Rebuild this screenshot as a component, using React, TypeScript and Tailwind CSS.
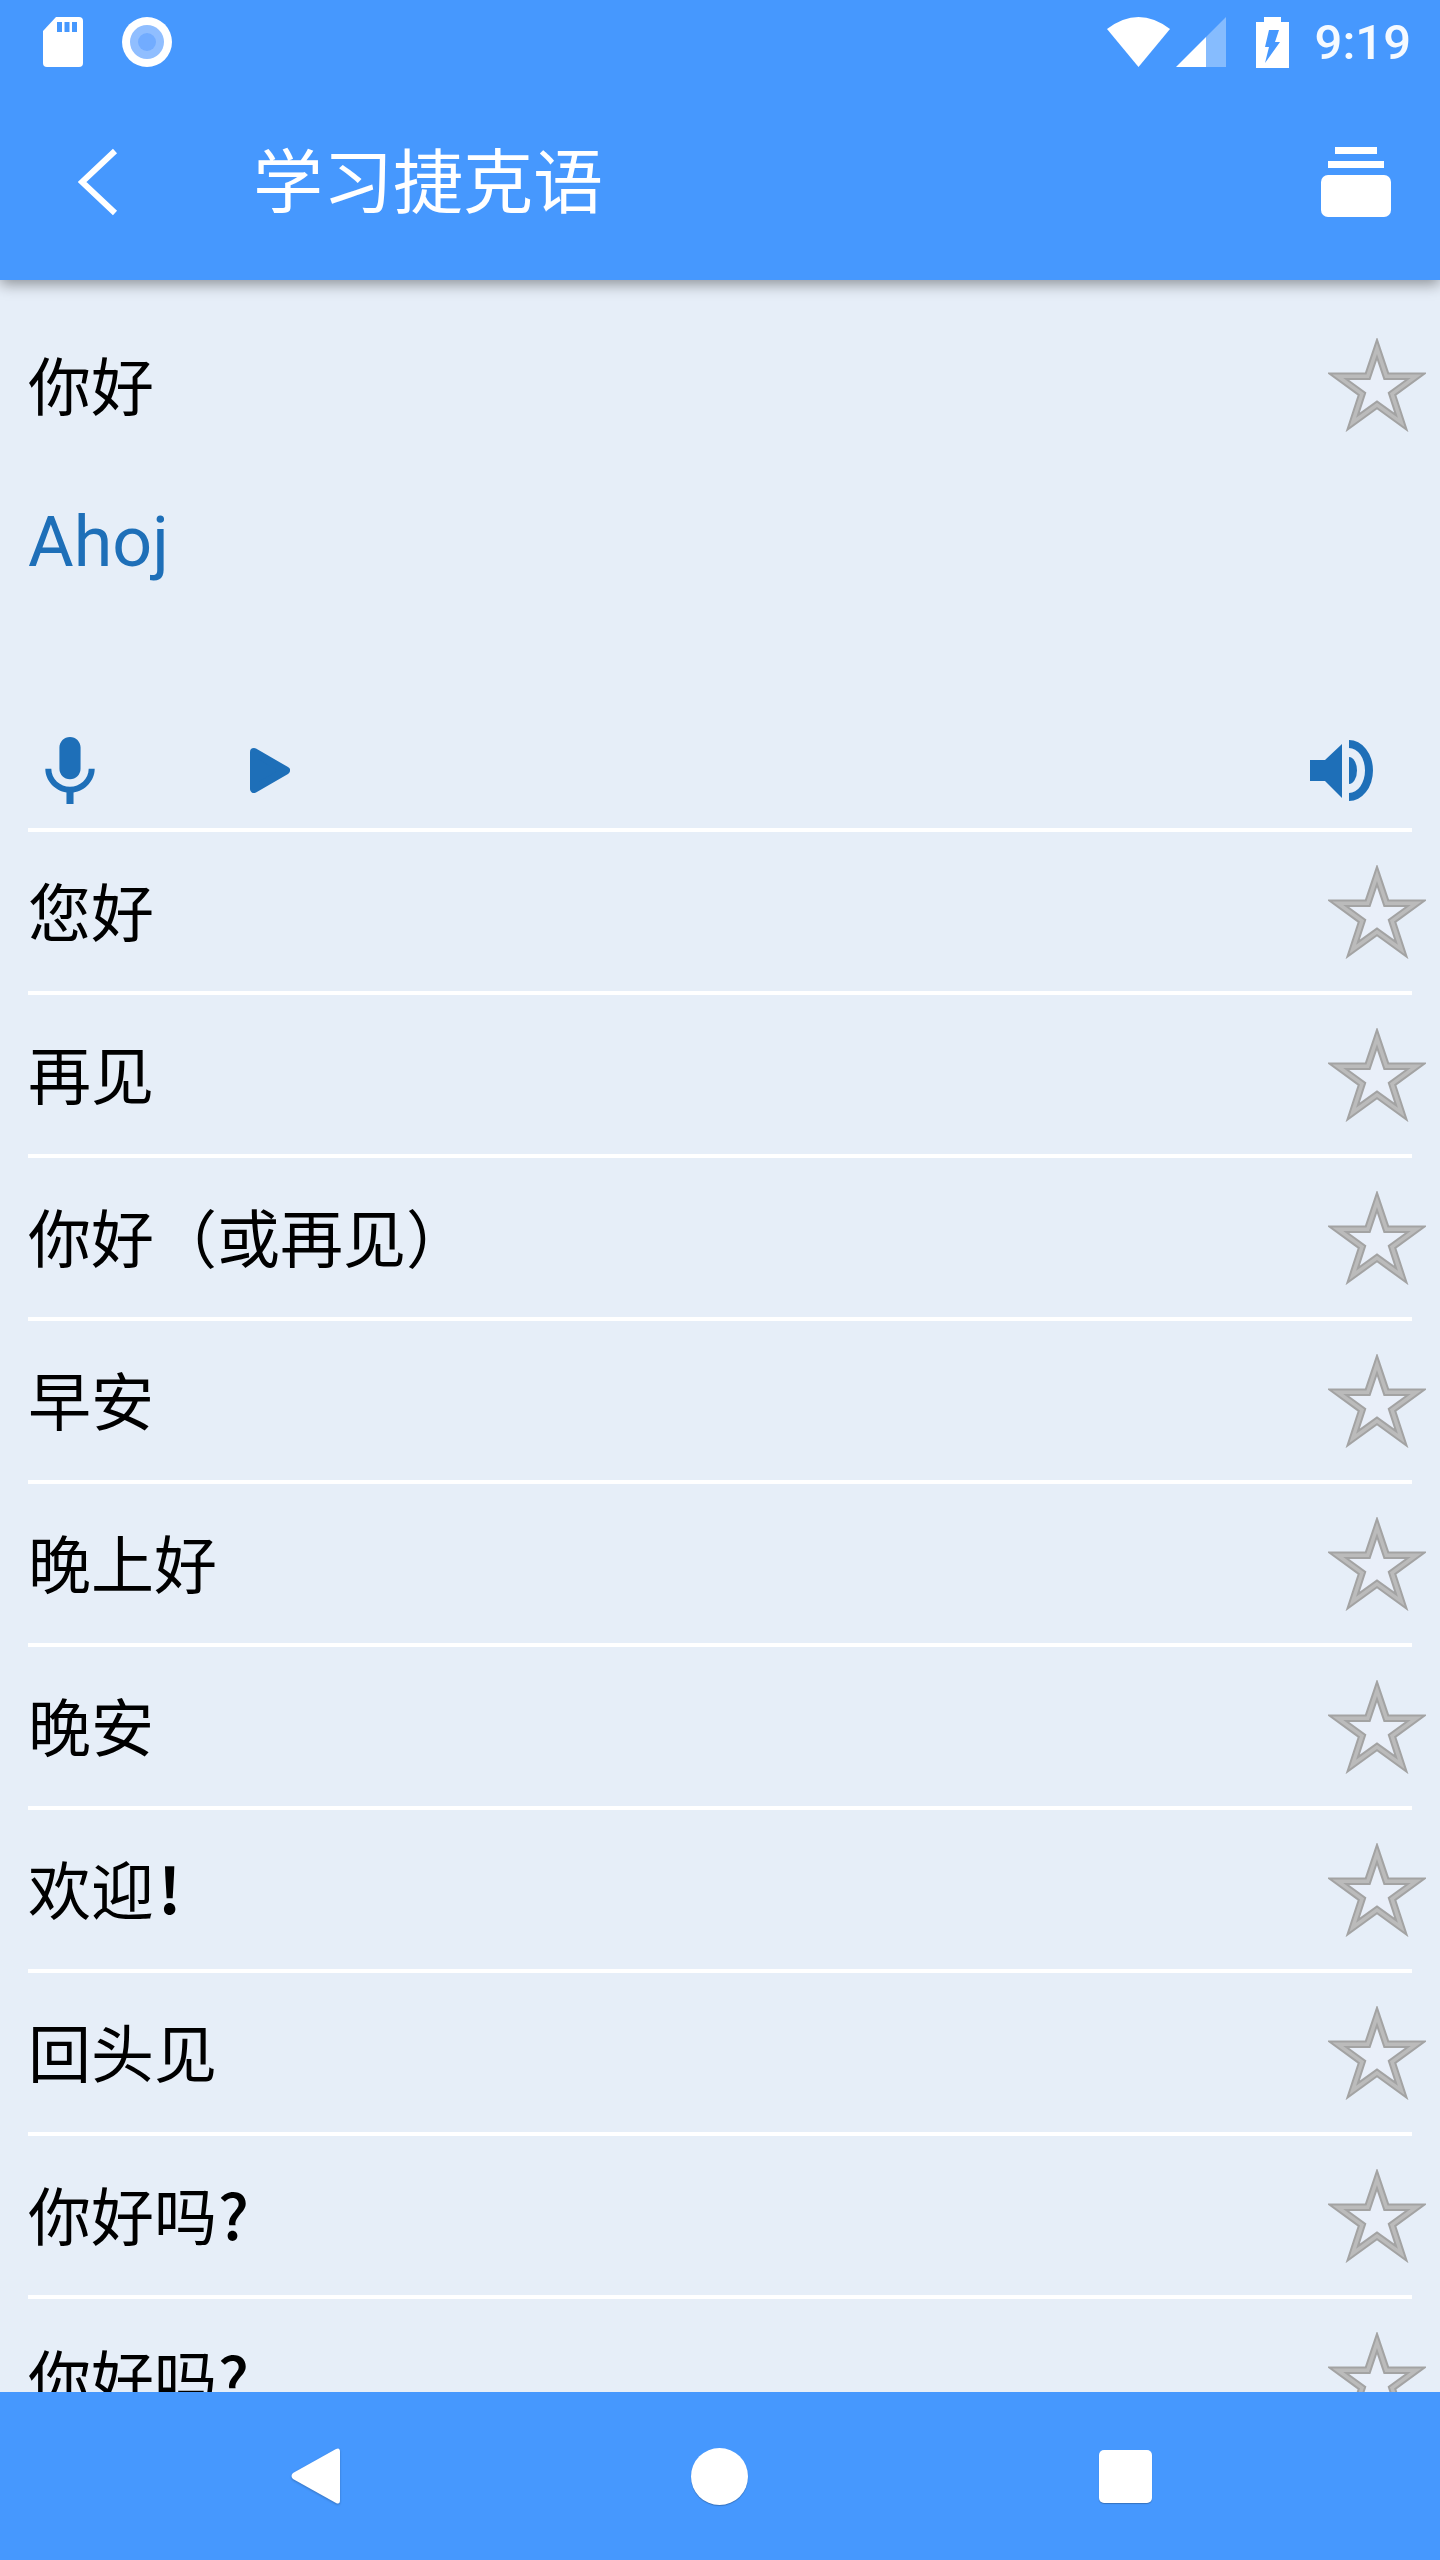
const starPts = "49,10.5 58.3,38.2 88.3,38.2 64,55.9 73.3,84.4 49,66.8 24.7,84.4 34,55.9 9.7,38.2 39.7,38.2";

function Star() {
  return (
    <svg width="98" height="94" viewBox="0 0 98 94" className="shrink-0">
      <polygon points={starPts} fill="#e9eff9" stroke="#a3a3a3" strokeWidth="7.5" strokeMiterlimit="10" />
      <polygon points={starPts} fill="none" stroke="#bbbbbb" strokeWidth="3.5" strokeMiterlimit="10" />
    </svg>
  );
}

function Separator() {
  return <div className="mx-[28px] h-[4px] bg-white" />;
}

function Phrase({ text, mark }: { text: string; mark?: string }) {
  return (
    <span
      className="relative top-[-3px] text-[63px] leading-none text-black"
      style={{ fontFamily: '"Noto Sans CJK SC", sans-serif' }}
    >
      {text}
      {mark === "!" && <span className="ml-[4px] font-bold">!</span>}
      {mark === "?" && <span className="ml-[1px] font-medium">?</span>}
    </span>
  );
}

function Row({ text, mark }: { text: string; mark?: string }) {
  return (
    <>
      <div className="flex h-[159px] items-center justify-between pl-[28px] pr-[14px]">
        <Phrase text={text} mark={mark} />
        <Star />
      </div>
      <Separator />
    </>
  );
}

const items: { text: string; mark?: string }[] = [
  { text: "您好" },
  { text: "再见" },
  { text: "你好（或再见）" },
  { text: "早安" },
  { text: "晚上好" },
  { text: "晚安" },
  { text: "欢迎", mark: "!" },
  { text: "回头见" },
  { text: "你好吗", mark: "?" },
  { text: "你好吗", mark: "?" },
];

export default function App() {
  return (
    <div
      className="flex h-[2560px] w-[1440px] flex-col overflow-hidden bg-[#e6eef8]"
      style={{ fontFamily: 'Roboto, "Noto Sans CJK SC", sans-serif' }}
    >
      <header className="relative z-10 h-[280px] shrink-0 bg-[#4698fe] shadow-[0_4px_14px_rgba(0,0,0,0.4)]">
        <div className="flex h-[84px] items-center pl-[43px] pr-[29px]">
          <svg width="40" height="50" viewBox="0 0 40 50">
            <path d="M13 0H36a4 4 0 0 1 4 4V46a4 4 0 0 1-4 4H4a4 4 0 0 1-4-4V14Z" fill="#fff" />
            <rect x="14" y="5" width="5" height="10" fill="#4698fe" />
            <rect x="21.5" y="5" width="5" height="10" fill="#4698fe" />
            <rect x="29" y="5" width="5" height="10" fill="#4698fe" />
          </svg>
          <svg width="50" height="50" viewBox="0 0 50 50" className="ml-[39px]">
            <circle cx="25" cy="25" r="25" fill="#fff" />
            <circle cx="25" cy="25" r="17" fill="#90beff" />
            <circle cx="25" cy="25" r="9" fill="#72acff" />
          </svg>
          <svg width="63" height="50" viewBox="0 0 63 50" className="ml-auto">
            <path d="M0 12Q31.5 -12 63 12L31.5 50Z" fill="#fff" />
          </svg>
          <svg width="50" height="50" viewBox="0 0 50 50" className="ml-[6px]">
            <polygon points="30,20 50,0 50,50 30,50" fill="#fff" fillOpacity="0.35" />
            <polygon points="0,50 30,20 30,50" fill="#fff" />
          </svg>
          <svg width="33" height="51" viewBox="0 0 33 51" className="ml-[30px]">
            <path d="M8 0H25V5H33V51H0V5H8Z" fill="#fff" />
            <polygon points="13,13 23,13 19,25 24,25 9,46 13,30 9,30" fill="#4698fe" />
          </svg>
          <span className="ml-[26px] text-[49px] font-medium leading-none text-white/95">9:19</span>
        </div>
        <div className="flex h-[196px] items-center pl-[78px] pr-[49px]">
          <svg width="40" height="68" viewBox="0 0 40 68">
            <path d="M37 3L4 34L37 65" fill="none" stroke="#fff" strokeWidth="6" />
          </svg>
          <h1 className="relative top-[2px] ml-[135px] text-[70px] font-normal leading-none text-white">学习捷克语</h1>
          <svg width="70" height="70" viewBox="0 0 70 70" className="ml-auto">
            <rect x="14" y="0" width="42" height="7" fill="#fff" />
            <rect x="7" y="14" width="56" height="7" fill="#fff" />
            <rect x="0" y="28" width="70" height="42" rx="7" fill="#fff" />
          </svg>
        </div>
      </header>

      <main className="min-h-0 flex-1 overflow-hidden">
        <div className="flex h-[210px] items-center justify-between pl-[28px] pr-[14px]">
          <Phrase text="你好" />
          <Star />
        </div>
        <div className="flex h-[100px] items-center pl-[28px]">
          <span className="relative top-[2px] text-[70px] leading-none text-[#1e6fb8]">Ahoj</span>
        </div>
        <div className="mb-[8px] mt-[130px] flex h-[100px] items-center pl-[45px] pr-[67px]">
          <svg width="50" height="67" viewBox="5 2 14 19">
            <path
              d="M12 14c1.66 0 2.99-1.34 2.99-3L15 5c0-1.66-1.34-3-3-3S9 3.34 9 5v6c0 1.66 1.34 3 3 3zm5.3-3c0 3-2.54 5.1-5.3 5.1S6.7 14 6.7 11H5c0 3.41 2.72 6.23 6 6.72V21h2v-3.28c3.28-.48 6-3.3 6-6.72h-1.7z"
              fill="#1e6fb8"
            />
          </svg>
          <svg width="40" height="45" viewBox="0 0 40 45" className="ml-[155px]">
            <polygon points="4,4 36,22.5 4,41" fill="#1e6fb8" stroke="#1e6fb8" strokeWidth="8" strokeLinejoin="round" />
          </svg>
          <svg width="63" height="61" viewBox="0 0 63 61" className="ml-auto">
            <path d="M0 20H15L32 4V58L15 41H0Z" fill="#1e6fb8" />
            <path d="M39 0A24 30.5 0 0 1 39 61V53A16 22.5 0 0 0 39 8Z" fill="#1e6fb8" />
            <path d="M39 17A8 13.5 0 0 1 39 44Z" fill="#1e6fb8" />
          </svg>
        </div>
        <Separator />
        {items.map((t, i) => (
          <Row key={i} text={t.text} mark={t.mark} />
        ))}
      </main>

      <nav className="flex h-[168px] shrink-0 items-center justify-between bg-[#4698fe] pl-[290px] pr-[288px]">
        <svg width="50" height="58" viewBox="0 0 50 58" className="drop-shadow-[0_1px_1px_rgba(0,0,0,0.25)]">
          <path d="M46 2L3 26Q0 29 3 32L46 56Q50 58 50 53V5Q50 0 46 2Z" fill="#fff" />
        </svg>
        <div className="h-[57px] w-[57px] rounded-full bg-white shadow-[0_1px_1px_rgba(0,0,0,0.25)]" />
        <div className="h-[53px] w-[53px] rounded-[5px] bg-white shadow-[0_1px_1px_rgba(0,0,0,0.25)]" />
      </nav>
    </div>
  );
}
